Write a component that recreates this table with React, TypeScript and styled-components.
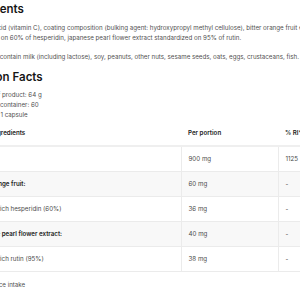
import React from 'react'
import styled, { createGlobalStyle } from 'styled-components'

const GlobalStyle = createGlobalStyle`
  html, body {
    margin: 0;
    padding: 0;
    background: #ffffff;
    overflow: hidden;
  }
  body {
    font-family: Inter, "Noto Sans", sans-serif;
  }
  *, *::before, *::after {
    box-sizing: border-box;
  }
`

interface NutrientRow {
  name: string
  portion: string
  ri: string
  group?: boolean
}

const rows: NutrientRow[] = [
  { name: 'Vitamin C', portion: '900 mg', ri: '1125' },
  { name: 'Bitter orange fruit:', portion: '60 mg', ri: '-', group: true },
  { name: '- extract rich hesperidin (60%)', portion: '36 mg', ri: '-' },
  { name: 'Japanese pearl flower extract:', portion: '40 mg', ri: '-', group: true },
  { name: '- extract rich rutin (95%)', portion: '38 mg', ri: '-' }
]

const App = () => {
  return (
    <>
      <GlobalStyle />
      <Viewport>
        <Content>
          <Heading>Ingredients</Heading>
          <Paragraph>
            L-ascorbic acid (vitamin C), coating composition (bulking agent: hydroxypropyl methyl cellulose), bitter orange fruit extract
            <br />
            standardized on 60% of hesperidin, japanese pearl flower extract standardized on 95% of rutin.
          </Paragraph>
          <Paragraph $gap={9}>Product may contain milk (including lactose), soy, peanuts, other nuts, sesame seeds, oats, eggs, crustaceans, fish.</Paragraph>

          <Heading $gap={8}>Nutrition Facts</Heading>
          <InfoList>
            <InfoItem>Net weight of product: 64 g</InfoItem>
            <InfoItem>Servings per container: 60</InfoItem>
            <InfoItem>Serving size: 1 capsule</InfoItem>
          </InfoList>

          <Table>
            <thead>
              <tr>
                <HeadCell $width={220}>Active ingredients</HeadCell>
                <HeadCell $width={97}>Per portion</HeadCell>
                <HeadCell>% RI*</HeadCell>
              </tr>
            </thead>
            <tbody>
              {rows.map((row, i) => (
                <BodyRow key={row.name} $striped={i % 2 === 1}>
                  <NameCell $bold={row.group}>{row.name}</NameCell>
                  <Cell>{row.portion}</Cell>
                  <Cell>{row.ri}</Cell>
                </BodyRow>
              ))}
            </tbody>
          </Table>

          <Footnote>*RI - Reference intake</Footnote>
        </Content>
      </Viewport>
    </>
  )
}

export default App

const Viewport = styled.div`
  width: 300px;
  height: 300px;
  overflow: hidden;
`

// the page is wider than the window: its left part lies outside the frame
const Content = styled.div`
  width: 440px;
  margin-left: -39px;
  padding-top: 2px;
`

const Heading = styled.h2<{ $gap?: number }>`
  margin: ${(p) => p.$gap || 0}px 0 0;
  font-size: 11.5px;
  line-height: 14px;
  font-weight: 600;
  color: #161616;
  white-space: nowrap;
`

const Paragraph = styled.p<{ $gap?: number }>`
  margin: ${(p) => p.$gap || 7}px 0 0;
  font-size: 6.2px;
  line-height: 10px;
  color: #505050;
  white-space: nowrap;
`

const InfoList = styled.ul`
  list-style: none;
  margin: 6px 0 0;
  padding: 0;
`

const InfoItem = styled.li`
  font-size: 6.2px;
  line-height: 10px;
  color: #505050;
  white-space: nowrap;
`

const Table = styled.table`
  border-collapse: collapse;
  table-layout: fixed;
  width: 440px;
  font-size: 6.2px;
  color: #4a4a4a;
`

const HeadCell = styled.th<{ $width?: number }>`
  width: ${(p) => (p.$width ? `${p.$width}px` : 'auto')};
  height: 26px;
  padding: 0 7px;
  text-align: left;
  font-weight: 600;
  color: #222222;
  border-bottom: 2px solid #efefef;
  white-space: nowrap;
  &:first-child {
    padding-left: 10px;
  }
`

const BodyRow = styled.tr<{ $striped: boolean }>`
  background: ${(p) => (p.$striped ? '#f8f8f8' : '#ffffff')};
  border-bottom: 1px solid #ebebeb;
`

const Cell = styled.td`
  height: 25px;
  padding: 0 7px;
  border-left: 1px solid #ebebeb;
  white-space: nowrap;
`

const NameCell = styled.td<{ $bold?: boolean }>`
  height: 25px;
  padding: 0 0 0 10px;
  font-weight: ${(p) => (p.$bold ? 600 : 400)};
  color: ${(p) => (p.$bold ? '#222222' : '#4a4a4a')};
  white-space: nowrap;
`

const Footnote = styled.p`
  margin: 8px 0 0;
  font-size: 6.2px;
  line-height: 10px;
  color: #505050;
  white-space: nowrap;
`
